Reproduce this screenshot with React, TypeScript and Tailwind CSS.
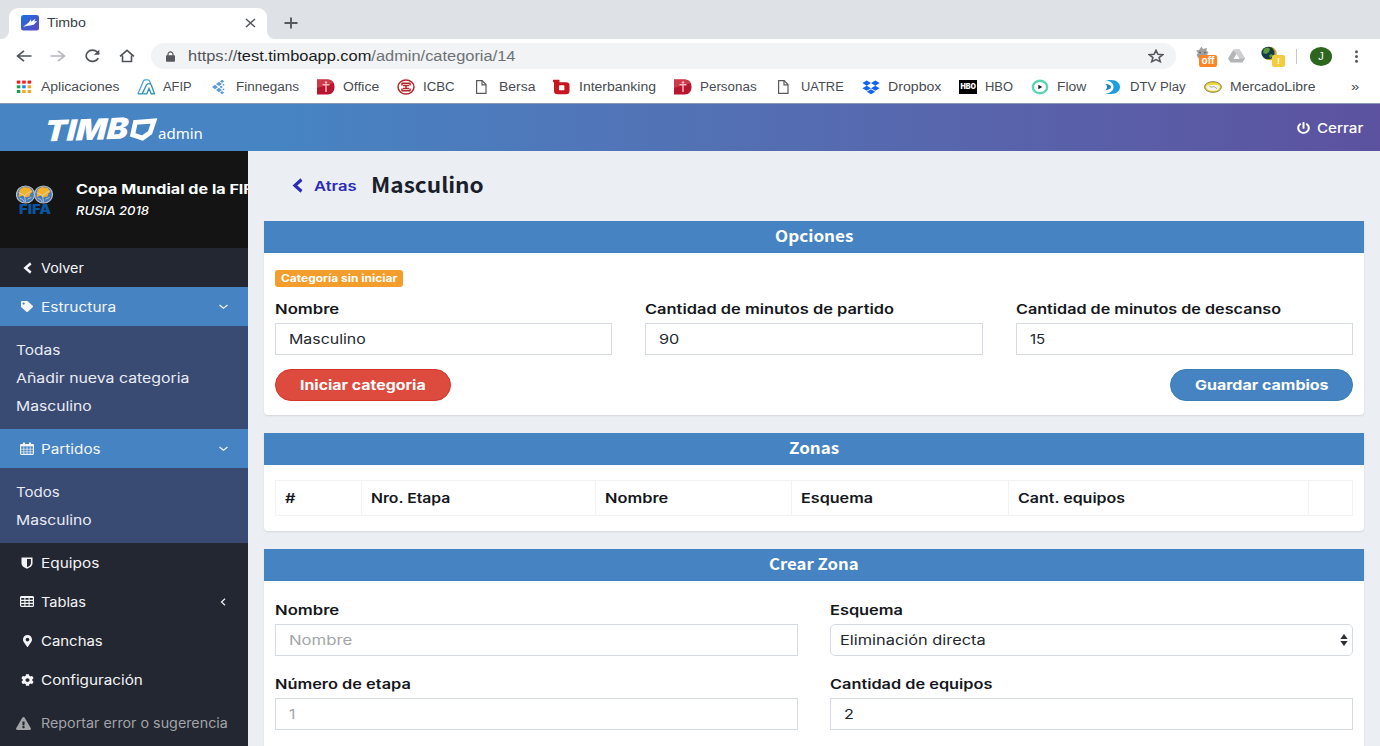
import { useLayoutEffect, useRef, useState } from "react";
import type { ReactNode } from "react";
import { FaChevronLeft, FaTag, FaMapMarkerAlt, FaCog, FaExclamationTriangle, FaPowerOff } from "react-icons/fa";

/* A line of text stretched horizontally to a given width. */
function Fit({ w, className = "", children }: { w: number; className?: string; children: ReactNode }) {
  const ref = useRef<HTMLSpanElement>(null);
  const [scale, setScale] = useState(1);
  useLayoutEffect(() => {
    if (ref.current) setScale(w / ref.current.offsetWidth);
  }, [w]);
  return (
    <span className={`block shrink-0 whitespace-nowrap ${className}`} style={{ width: w }}>
      <span ref={ref} className="inline-block origin-left" style={{ transform: `scaleX(${scale})` }}>
        {children}
      </span>
    </span>
  );
}

/* ---------- browser ---------- */

const PageIcon = () => (
  <svg width="18" height="16" viewBox="0 0 18 16" fill="none" stroke="#5a5a5a" strokeWidth="1.2">
    <path d="M3.600 1.600h5.600l3.800 4v8.800H3.600z" fill="#fff" />
    <path d="M9 1.600v4.200h4" />
  </svg>
);

const RedD = () => (
  <svg width="18" height="16" viewBox="0 0 18 16">
    <path d="M0 .5h10.500c4.600 0 7 3.200 7 7.500s-2.400 7.500-7 7.500H0z" fill="#b8162f" />
    <path d="M0 .5h10.500c3 0 5 1.400 6.100 3.500L0 9z" fill="#cf3a4a" />
    <path d="M5.500 5.800h7M9 5v8" stroke="#efb6bc" strokeWidth="1.500" />
    <circle cx="9" cy="3.500" r="1.200" fill="#efb6bc" />
  </svg>
);

const AppsIcon = () => {
  const colors = ["#f01818", "#f01818", "#f01818", "#1f9d4d", "#1a86f0", "#f5a623", "#1f9d4d", "#f5a623", "#f5a623"];
  return (
    <svg width="18" height="16" viewBox="0 0 18 16">
      {colors.map((c, i) => (
        <rect key={i} x={1.800 + (i % 3) * 5.400} y={1.600 + Math.floor(i / 3) * 4.700} width="3.500" height="3" fill={c} />
      ))}
    </svg>
  );
};

const bookmarks: { label: string; w: number; icon: ReactNode }[] = [
  { label: "Aplicaciones", w: 78, icon: <AppsIcon /> },
  {
    label: "AFIP",
    w: 29,
    icon: (
      <svg width="18" height="16" viewBox="0 0 18 16" fill="none" strokeWidth="1.300">
        <path d="M.9 14.800 6.500 2Q7 .9 8.300 .9h2.600q1.200 0 1.600 1.100l1.300 3" stroke="#4aa6dc" />
        <path d="M.9 14.800h4.300L9.400 6Q10.200 4.600 12 4.600t2.400 1.600l3 8.600h-3.200L12 9.500l-2.200 5.300H6.200" stroke="#2b8fae" />
      </svg>
    ),
  },
  {
    label: "Finnegans",
    w: 63,
    icon: (
      <svg width="18" height="16" viewBox="0 0 18 16" fill="#5b9bd5">
        <path d="M2 8l3-2.300L8 8l-3 2.300zM6 5l3-2.200L12 5 9 7zM6 11l3-2.200 3 2.200-3 2.200zM10 2.300l2-1.600 2.300 1.600L12 4zM10 13.700l2-1.600 2.300 1.600-2.300 1.600zM9.500 8l1.700-1.300L13 8l-1.800 1.300z" />
        <circle cx="13.500" cy="5.800" r=".9" />
        <circle cx="13.500" cy="10.300" r=".9" />
      </svg>
    ),
  },
  { label: "Office", w: 36, icon: <RedD /> },
  {
    label: "ICBC",
    w: 32,
    icon: (
      <svg width="18" height="16" viewBox="0 0 18 16" fill="none" stroke="#b5262b">
        <ellipse cx="9" cy="8" rx="8" ry="7.100" strokeWidth="1.500" />
        <path d="M4.500 4.200h9M4.500 11.800h9M6 6.600h6M6 9.400h6M9 6.600v3M5 4v2.600M13 4v2.600M5 9.400v2.600M13 9.400v2.600" strokeWidth="1.500" />
      </svg>
    ),
  },
  { label: "Bersa", w: 36, icon: <PageIcon /> },
  {
    label: "Interbanking",
    w: 77,
    icon: (
      <svg width="18" height="16" viewBox="0 0 18 16">
        <path d="M0 .8h6.500v2.400H13q3.500 0 3.500 3.200V12q0 3.200-3.500 3.200H4.500Q1 15.200 1 12V3.200H0z" fill="#c9151e" />
        <rect x="6" y="6.300" width="5.400" height="5" rx=".6" fill="#fff" />
      </svg>
    ),
  },
  { label: "Personas", w: 57, icon: <RedD /> },
  { label: "UATRE", w: 43, icon: <PageIcon /> },
  {
    label: "Dropbox",
    w: 53,
    icon: (
      <svg width="18" height="16" viewBox="0 0 18 16" fill="#0f66f5">
        <path d="M4.700 1.500 9 4.100 4.700 6.700.4 4.100zM13.300 1.500l4.300 2.600-4.300 2.600L9 4.100zM4.700 6.700 9 9.300l-4.300 2.500L.4 9.300zM13.300 6.700l4.300 2.600-4.300 2.500L9 9.300zM9 10.200l4.200 2.500L9 15.200l-4.200-2.500z" />
      </svg>
    ),
  },
  {
    label: "HBO",
    w: 28,
    icon: (
      <span className="flex h-[14px] w-[18px] items-center justify-center bg-black text-white">
        <Fit w={15} className="text-[7px] leading-[8px] font-black font-['Inter',sans-serif]">HBO</Fit>
      </span>
    ),
  },
  {
    label: "Flow",
    w: 29,
    icon: (
      <svg width="18" height="16" viewBox="0 0 18 16">
        <ellipse cx="9" cy="8" rx="7.200" ry="6.300" fill="#fff" stroke="#5cd6b0" strokeWidth="2.400" />
        <path d="m7.300 5.800 4 2.200-4 2.200z" fill="#222" />
      </svg>
    ),
  },
  {
    label: "DTV Play",
    w: 56,
    icon: (
      <svg width="18" height="16" viewBox="0 0 18 16">
        <path d="M1.500 1h5.500c6 0 9 3.400 9 7s-3 7-9 7H1.500c5-1.200 8-3.200 8-7s-3-5.800-8-7z" fill="#1a9fe0" />
        <path d="M1.500 4.800C5 5.300 7 6.300 7 8s-2 2.700-5.500 3.200c2-2 2-4.400 0-6.400z" fill="#2a80b8" />
      </svg>
    ),
  },
  {
    label: "MercadoLibre",
    w: 85,
    icon: (
      <svg width="18" height="16" viewBox="0 0 18 16">
        <ellipse cx="9" cy="8" rx="8.400" ry="5.300" fill="#f0d830" stroke="#77734a" strokeWidth=".9" />
        <path d="M2.500 6.800Q5.500 6.300 9 5.800t6.500 1q.8 2.600-2 4.100-4.500 1.900-9 0-2.800-1.500-2-4.100z" fill="#f4f4ef" />
        <path d="M5.500 7.300Q8 9 10 7.500l3 2.200" fill="none" stroke="#8b8a70" strokeWidth=".7" />
      </svg>
    ),
  },
];

function TabStrip() {
  return (
    <div className="flex h-[39px] items-end bg-[#dee1e6]">
      <div className="h-[8px] w-[9px] self-end bg-white">
        <div className="h-full w-full rounded-br-lg bg-[#dee1e6]" />
      </div>
      <div className="flex h-[31px] w-[258px] items-center rounded-t-[9px] bg-white pl-3">
        <svg className="mb-px" width="18" height="16" viewBox="0 0 18 16">
          <defs>
            <linearGradient id="fav" x1="0" y1="0" x2="1" y2="1">
              <stop offset="0" stopColor="#1a6fe0" />
              <stop offset="1" stopColor="#6048c0" />
            </linearGradient>
          </defs>
          <rect width="18" height="15.500" rx="2.500" fill="url(#fav)" />
          <path d="m2 11.800 5.500-4 2.700-3.800-.3 2.700 4.600-3-1.300 2.800 3-.4-3.500 3.600-5 1z" fill="#fff" />
        </svg>
        <Fit w={39} className="mb-px ml-2 text-[12px] leading-4 text-[#3b3f44]">Timbo</Fit>
        <svg className="mb-px ml-[159px]" width="11" height="10" viewBox="0 0 11 10" stroke="#50545a" strokeWidth="1.500">
          <path d="m1 1 9 8M10 1 1 9" />
        </svg>
      </div>
      <div className="h-[8px] w-[9px] bg-white">
        <div className="h-full w-full rounded-bl-lg bg-[#dee1e6]" />
      </div>
      <svg className="mb-[10px] ml-2" width="14" height="12" viewBox="0 0 14 12" stroke="#55595f" strokeWidth="1.900">
        <path d="M7 .5v11M.5 6h13" />
      </svg>
    </div>
  );
}

function Toolbar() {
  return (
    <div className="flex h-[35px] items-center bg-white pb-px pl-4">
      <svg width="16" height="12" viewBox="0 0 16 14" preserveAspectRatio="none" fill="none" stroke="#4f5358" strokeWidth="1.700">
        <path d="M15.500 7H2M8 1 1.500 7 8 13" />
      </svg>
      <svg className="ml-[18px]" width="16" height="12" viewBox="0 0 16 14" preserveAspectRatio="none" fill="none" stroke="#b5b7ba" strokeWidth="1.700">
        <path d="M.5 7H14M8 1l6.500 6L8 13" />
      </svg>
      <svg className="ml-[18px]" width="17" height="14" viewBox="0 0 17 14" fill="none" stroke="#4f5358" strokeWidth="1.700">
        <path d="M14.300 9.200A6.400 5.600 0 1 1 13.200 3L15 4.800" />
        <path d="M15.300.8v5h-5.500z" fill="#4f5358" stroke="none" />
      </svg>
      <svg className="ml-[18px]" width="16" height="14" viewBox="0 0 16 14" fill="none" stroke="#4f5358" strokeWidth="1.600">
        <path d="M1 7.400 8 1.400l7 6M3.500 6.500v6h9v-6" />
      </svg>
      <div className="ml-4 flex h-[26px] w-[1025px] items-center rounded-full bg-[#f1f3f4] pr-3 pl-[15px]">
        <svg width="9" height="11" viewBox="0 0 9 11">
          <path d="M2 5V3.200a2.500 2.300 0 0 1 5 0V5" fill="none" stroke="#55595f" strokeWidth="1.200" />
          <rect y="4.300" width="9" height="6.500" rx=".8" fill="#55595f" />
        </svg>
        <Fit w={327} className="ml-[13px] text-[14px] leading-5 text-[#6d7176]">
          <span className="text-[#52565b]">https://</span>
          <span className="text-[#1c1d1f]">test.timboapp.com</span>/admin/categoria/14
        </Fit>
        <svg className="ml-auto" width="16" height="14" viewBox="0 0 15 14" preserveAspectRatio="none" fill="none" stroke="#55595f" strokeWidth="1.500">
          <path d="m7.500 1.300 1.800 4 4.600.4-3.500 2.900 1.100 4.100-4-2.200-4 2.200 1.100-4.100L1.100 5.700l4.600-.4z" />
        </svg>
      </div>
      <div className="relative ml-[19px] h-5 w-[22px]">
        <svg width="15" height="14" viewBox="0 0 15 14">
          <path d="M1 4.500 4 4l2.500-3.500L8 3l4-1-.500 3 2 1-1 2-1 4-4 1.500-4-1L1.500 9 3 7z" fill="#a0a0a0" />
          <path d="m4 6 2 1M9 7l2-1M4 10l2 1" stroke="#555" strokeWidth="1" />
        </svg>
        <span className="absolute top-[9px] left-1 flex h-[12px] w-[18px] items-center justify-center rounded-xs bg-[#fb8524] text-[10px] leading-none font-bold text-white">
          off
        </span>
      </div>
      <svg className="ml-[11px]" width="17" height="14" viewBox="0 0 17 14">
        <path d="M5.500.5h6L17 9.500l-2.500 4h-12L0 9.500z" fill="#b4b5b7" />
        <path d="M8.500 5 5 .9 11.500.5 17 9.500h-5.500z" fill="#cfcfd1" />
        <path d="m8.500 4.800 3 5.200h-6z" fill="#fff" />
      </svg>
      <div className="relative ml-4 h-5 w-6">
        <svg width="16" height="15" viewBox="0 0 16 15">
          <ellipse cx="8.800" cy="7.500" rx="7" ry="6.800" fill="#d9a91f" />
          <ellipse cx="7" cy="7" rx="6.600" ry="6.300" fill="#123c4c" />
          <path d="M3 3q4-3 6 0L8 6 5 8 2 7zM8 9l3-1 1 2-3 2z" fill="#5c9a3a" />
        </svg>
        <span className="absolute top-[9px] left-[11px] flex h-[12px] w-[13px] items-center justify-center rounded-xs bg-[#f3cd3d] text-[9px] leading-none font-bold text-white">
          !
        </span>
      </div>
      <div className="ml-[11px] h-[15px] w-px bg-[#c6c8ca]" />
      <div className="ml-[13px] flex h-[19px] w-[22px] items-center justify-center rounded-[50%] bg-[#2e661f] text-[11px] leading-none text-white">
        J
      </div>
      <svg className="ml-[22px]" width="5" height="13" viewBox="0 0 5 13" fill="#55595f">
        <circle cx="2.500" cy="1.700" r="1.500" />
        <circle cx="2.500" cy="6.500" r="1.500" />
        <circle cx="2.500" cy="11.300" r="1.500" />
      </svg>
    </div>
  );
}

function Bookmarks() {
  return (
    <div className="flex h-[29px] items-center gap-[18px] bg-white pb-[4px] pl-[15px]">
      {bookmarks.map((b) => (
        <div key={b.label} className="flex items-center gap-2">
          <span className="flex w-[18px] shrink-0">{b.icon}</span>
          <Fit w={b.w} className="text-[12px] leading-4 text-[#484c51]">{b.label}</Fit>
        </div>
      ))}
      <Fit w={8} className="ml-[18px] text-[13px] leading-4 text-[#484c51]">»</Fit>
    </div>
  );
}

/* ---------- sidebar ---------- */

const CalendarIcon = () => (
  <svg width="14" height="13" viewBox="0 0 14 13" fill="none" stroke="currentColor">
    <rect x=".6" y="2.600" width="12.800" height="9.800" rx=".8" strokeWidth="1.100" />
    <path d="M.6 3.300h12.800" strokeWidth="2.200" />
    <path d="M4 .4v3M10 .4v3" strokeWidth="2" />
    <path d="M3.800 4.500v8M7 4.500v8M10.200 4.500v8M.6 7.200h12.800M.6 9.800h12.800" strokeWidth=".7" />
  </svg>
);
const TableIcon = () => (
  <svg width="14" height="11" viewBox="0 0 14 11" fill="none" stroke="currentColor">
    <rect x=".6" y=".6" width="12.800" height="9.800" rx="1" strokeWidth="1.200" />
    <path d="M.6 1.200h12.800" strokeWidth="1.600" />
    <path d="M4.900 1v9.400M9.100 1v9.400M.6 4.400h12.800M.6 7.400h12.800" strokeWidth="1.100" />
  </svg>
);
const ShieldIcon = () => (
  <svg width="12" height="12" viewBox="0 0 12 12" fill="currentColor">
    <path fillRule="evenodd" d="M.5.500h11v5.800c0 2.700-2.800 4.500-5.500 5.500C3.300 10.800.5 9 .5 6.300zM6 2v8.200c1.800-.8 3.900-2.200 3.900-4V2z" />
  </svg>
);
const BackIcon = ({ className }: { className: string }) => (
  <svg className={className} viewBox="0 0 11 13" preserveAspectRatio="none" fill="none" stroke="currentColor" strokeWidth="3">
    <path d="M9.500 1.500 3 6.500l6.500 5" />
  </svg>
);

const Chevron = ({ d }: { d: string }) => (
  <svg width="9" height="8" viewBox="0 0 9 8" fill="none" stroke="currentColor" strokeWidth="1.200">
    <path d={d} />
  </svg>
);
const downPath = "m.5 2 4 3.300 4-3.300";
const leftPath = "M6 .8 2.500 4 6 7.200";

function NavRow({ icon, label, w, active, chevron }: { icon: ReactNode; label: string; w: number; active?: boolean; chevron?: string }) {
  return (
    <div className={`flex h-[39px] shrink-0 items-center pr-5 pl-5 text-[#f4f5f7] ${active ? "bg-[#4683c2]" : ""}`}>
      <span className="flex w-[14px] shrink-0 justify-center">{icon}</span>
      <Fit w={w} className="ml-[7px] text-[13px] leading-5">{label}</Fit>
      {chevron && (
        <span className="ml-auto">
          <Chevron d={chevron} />
        </span>
      )}
    </div>
  );
}

function SubMenu({ items }: { items: { label: string; w: number }[] }) {
  return (
    <div className="shrink-0 bg-[#394a73] pt-[10px] pb-[9px] pl-4 text-[#e9ecf3]">
      {items.map((i) => (
        <div key={i.label} className="flex h-7 items-center">
          <Fit w={i.w} className="text-[13px] leading-5">{i.label}</Fit>
        </div>
      ))}
    </div>
  );
}

function FifaLogo() {
  return (
    <div className="flex w-[38px] shrink-0 flex-col items-center">
      <svg width="38" height="19" viewBox="0 0 38 20" preserveAspectRatio="none">
        {[9.5, 27.5].map((cx) => (
          <g key={cx}>
            <ellipse cx={cx} cy="10" rx="9" ry="9" fill="#4a7ab3" stroke="#b6c0cc" strokeWidth="1.200" />
            <path d={`M${cx - 6} 5l4-3 6 1 3 4-2 2-1 3-4 1-3-2-4 2z`} fill="#f2b02c" />
            <path
              d={`M${cx - 6} 14l3 1 2 3M${cx + 2} 15l4-2M${cx - 7} 8l6 3 7-5M${cx - 1} 11l1 7`}
              fill="none"
              stroke="#d7dfe8"
              strokeWidth=".7"
            />
          </g>
        ))}
      </svg>
      <Fit w={32} className="h-[11px] text-[12.500px] leading-[12px] font-black text-[#0b559f]">FIFA</Fit>
    </div>
  );
}

function Sidebar() {
  return (
    <aside className="flex w-[248px] shrink-0 flex-col overflow-hidden bg-[#232731]">
      <div className="flex h-[97px] shrink-0 items-center overflow-hidden bg-[#141414] pl-4">
        <FifaLogo />
        <div className="ml-[22px] min-w-0 text-white">
          <Fit w={187} className="text-[13px] leading-[22px] font-bold">Copa Mundial de la FIFA</Fit>
          <Fit w={73} className="text-[12px] leading-[22px] font-medium italic">RUSIA 2018</Fit>
        </div>
      </div>
      <NavRow icon={<BackIcon className="h-3 w-[9px]" />} label="Volver" w={43} />
      <NavRow icon={<FaTag className="h-[11px] w-3" preserveAspectRatio="none" />} label="Estructura" w={75} active chevron={downPath} />
      <SubMenu items={[{ label: "Todas", w: 44 }, { label: "Añadir nueva categoria", w: 173 }, { label: "Masculino", w: 76 }]} />
      <NavRow icon={<CalendarIcon />} label="Partidos" w={60} active chevron={downPath} />
      <SubMenu items={[{ label: "Todos", w: 44 }, { label: "Masculino", w: 76 }]} />
      <NavRow icon={<ShieldIcon />} label="Equipos" w={58} />
      <NavRow icon={<TableIcon />} label="Tablas" w={45} chevron={leftPath} />
      <NavRow icon={<FaMapMarkerAlt className="h-3 w-[9px]" preserveAspectRatio="none" />} label="Canchas" w={62} />
      <NavRow icon={<FaCog className="h-3 w-[13px]" preserveAspectRatio="none" />} label="Configuración" w={102} />
      <div className="flex h-[48px] shrink-0 items-center pl-4 text-[#a2a4a8]">
        <FaExclamationTriangle className="h-[13px] w-[15px] shrink-0" preserveAspectRatio="none" />
        <Fit w={187} className="ml-[10px] text-[13px] leading-5">Reportar error o sugerencia</Fit>
      </div>
    </aside>
  );
}

/* ---------- content ---------- */

const heading = "font-['Noto_Sans_CJK_JP',sans-serif]";

function Card({ title, w, className = "", children }: { title: string; w: number; className?: string; children: ReactNode }) {
  return (
    <section className={`shrink-0 rounded-b-[4px] bg-white shadow-[0_1px_2px_rgba(0,0,0,0.1)] ${className}`}>
      <h2 className="flex h-[32px] items-center justify-center bg-[#4683c2] pb-1 text-white">
        <Fit w={w} className={`text-[16px] leading-6 font-bold ${heading}`}>{title}</Fit>
      </h2>
      {children}
    </section>
  );
}

function Field({ label, lw, value, vw, muted, select }: { label: string; lw: number; value: string; vw: number; muted?: boolean; select?: boolean }) {
  return (
    <div className="min-w-0">
      <Fit w={lw} className="text-[13px] leading-5 font-semibold text-[#15171c]">{label}</Fit>
      <div
        className={`mt-1 flex h-8 items-center justify-between border border-[#d5dae2] bg-white ${select ? "rounded-[5px] pr-1 pl-[9px]" : "pl-[13px]"} ${muted ? "text-[#a3a5a8]" : "text-[#24282e]"}`}
      >
        <Fit w={vw} className="text-[13px] leading-5">{value}</Fit>
        {select && (
          <svg width="8" height="12" viewBox="0 0 8 12" fill="#2a2d33">
            <path d="M4 0l3.600 5H.4zM4 12l3.600-5H.4z" />
          </svg>
        )}
      </div>
    </div>
  );
}

function ZonesTable() {
  const cell = "flex items-center border-r border-[#f1f2f4] pl-[9px]";
  const cols = [
    { label: "#", w: 10 },
    { label: "Nro. Etapa", w: 80 },
    { label: "Nombre", w: 63 },
    { label: "Esquema", w: 72 },
    { label: "Cant. equipos", w: 107 },
  ];
  return (
    <div className="mx-[11px] mt-[15px] grid h-9 grid-cols-[86px_234px_196px_217px_300px_1fr] border border-r-0 border-[#f1f2f4] text-[#15171c]">
      {cols.map((c) => (
        <div key={c.label} className={cell}>
          <Fit w={c.w} className="text-[13px] leading-5 font-semibold">{c.label}</Fit>
        </div>
      ))}
      <div className={cell} />
    </div>
  );
}

function Logo() {
  return (
    <div className="flex items-end pl-[45px] text-white">
      <Fit w={83} className="mb-px h-[25px] -rotate-2 -skew-x-6 text-[29px] leading-[29px] font-black italic">TIMB</Fit>
      <svg className="-mb-px" width="30" height="24" viewBox="0 0 30 24" fill="none" stroke="#fff" strokeWidth="4.800">
        <path d="M7.400 4.300 26 3l-4 11.800-7.500 5.200-9.800-3.200z" />
      </svg>
      <Fit w={45} className="-mb-[3px] text-[14px] leading-5 font-['Noto_Sans',sans-serif]">admin</Fit>
    </div>
  );
}

export default function App() {
  return (
    <div className="flex h-[746px] w-[1380px] flex-col overflow-hidden bg-[#ebeef3] font-['Inter',sans-serif]">
      <div className="shrink-0 font-['Liberation_Sans',sans-serif]">
        <TabStrip />
        <Toolbar />
        <Bookmarks />
      </div>
      <header className="flex h-12 shrink-0 items-center justify-between border-t border-[#8b97b5] bg-linear-to-r from-[#4684c3] from-20% to-[#5c529f] pr-[17px]">
        <Logo />
        <div className="flex items-center text-white">
          <FaPowerOff className="h-3 w-[13px]" preserveAspectRatio="none" />
          <Fit w={46} className="ml-[7px] text-[13.500px] leading-5 font-medium">Cerrar</Fit>
        </div>
      </header>
      <div className="flex min-h-0 flex-1">
        <Sidebar />
        <main className="flex min-w-0 flex-1 flex-col overflow-hidden px-4">
          <div className="flex h-[70px] shrink-0 items-center pb-px pl-7">
            <BackIcon className="h-[15px] w-[11px] text-[#2b2bb8]" />
            <Fit w={42} className="ml-[11px] text-[13px] leading-5 font-semibold text-[#2b2bb8]">Atras</Fit>
            <Fit w={113} className={`mb-[3px] ml-[15px] text-[21px] leading-7 font-bold text-[#1a1f2b] ${heading}`}>Masculino</Fit>
          </div>
          <Card title="Opciones" w={78} className="h-[194px]">
            <div className="flex flex-col px-[11px] pt-[17px]">
              <div className="flex h-[17px] w-32 items-center justify-center rounded-[3px] bg-[#f29d2c] pb-px">
                <Fit w={116} className="text-[10px] leading-4 font-bold text-white">Categoría sin iniciar</Fit>
              </div>
              <div className="mt-3 grid grid-cols-3 gap-[33px]">
                <Field label="Nombre" lw={64} value="Masculino" vw={77} />
                <Field label="Cantidad de minutos de partido" lw={249} value="90" vw={20} />
                <Field label="Cantidad de minutos de descanso" lw={265} value="15" vw={15} />
              </div>
              <div className="mt-[14px] flex justify-between text-white">
                <div className="flex h-8 w-44 items-center justify-center rounded-full border border-[#d7342a] bg-[#dd4b3e]">
                  <Fit w={126} className="text-[13px] leading-5 font-bold">Iniciar categoria</Fit>
                </div>
                <div className="flex h-8 w-[183px] items-center justify-center rounded-full border border-[#3a80b4] bg-[#4683c2]">
                  <Fit w={134} className="text-[13px] leading-5 font-bold">Guardar cambios</Fit>
                </div>
              </div>
            </div>
          </Card>
          <Card title="Zonas" w={50} className="mt-[18px] h-[98px]">
            <ZonesTable />
          </Card>
          <Card title="Crear Zona" w={90} className="mt-[18px] h-[240px]">
            <div className="grid grid-cols-2 gap-x-8 gap-y-[18px] px-[11px] pt-[19px]">
              <Field label="Nombre" lw={64} value="Nombre" vw={63} muted />
              <Field label="Esquema" lw={73} value="Eliminación directa" vw={146} select />
              <Field label="Número de etapa" lw={136} value="1" vw={6} muted />
              <Field label="Cantidad de equipos" lw={162} value="2" vw={10} />
            </div>
          </Card>
        </main>
      </div>
    </div>
  );
}
